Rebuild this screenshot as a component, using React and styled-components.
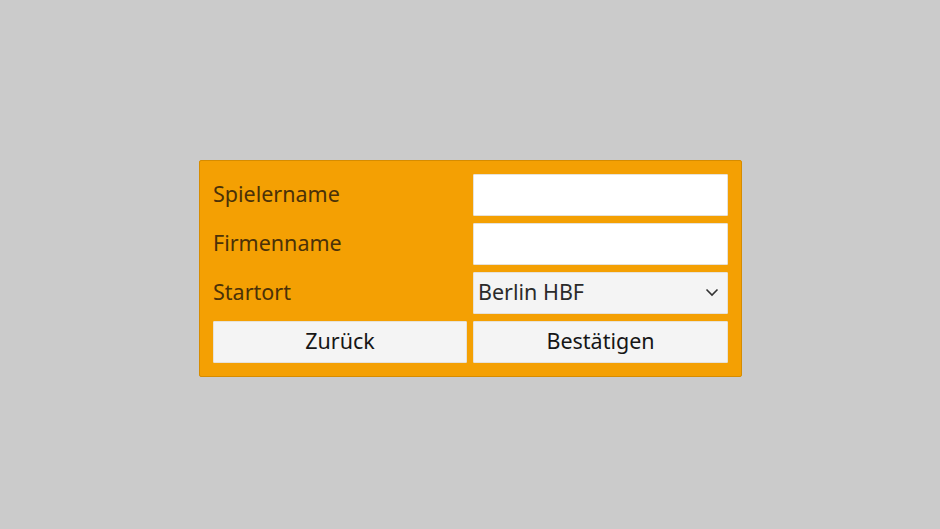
import React from 'react';
import styled, { createGlobalStyle } from 'styled-components';

const GlobalStyle = createGlobalStyle`
  html, body {
    margin: 0;
    padding: 0;
    height: 100%;
    background: #cbcbcb;
  }
  #root {
    height: 100%;
  }
`;

const Page = styled.div`
  width: 940px;
  height: 529px;
  display: flex;
  align-items: flex-start;
  justify-content: center;
  padding-top: 160px;
  box-sizing: border-box;
  font-family: 'Noto Sans', 'Open Sans', sans-serif;
`;

const Panel = styled.form`
  width: 543px;
  box-sizing: border-box;
  margin-left: 1px;
  padding: 13px;
  background: #f4a003;
  border: 1px solid #d68c00;
  border-radius: 2px;
  display: grid;
  grid-template-columns: 254px 255px;
  column-gap: 6px;
  row-gap: 7px;
`;

const Label = styled.label`
  height: 42px;
  box-sizing: border-box;
  padding-bottom: 3px;
  display: flex;
  align-items: center;
  font-size: 21.5px;
  color: #4b3108;
`;

const Field = styled.input`
  height: 42px;
  box-sizing: border-box;
  margin: 0;
  border: 1px solid #e7e2d8;
  border-radius: 1px;
  background: #ffffff;
  font: inherit;
  font-size: 21.5px;
  padding: 0 6px;
  outline: none;
`;

const SelectWrap = styled.div`
  position: relative;
  height: 42px;
`;

const Select = styled.select`
  appearance: none;
  width: 100%;
  height: 42px;
  box-sizing: border-box;
  margin: 0;
  border: 1px solid #e7e2d8;
  border-radius: 1px;
  background: #f4f4f4;
  font: inherit;
  font-size: 21.5px;
  color: #2b2b2b;
  padding: 0 0 3px 4px;
  outline: none;
`;

const Chevron = styled.svg`
  position: absolute;
  right: 9px;
  top: 15px;
  pointer-events: none;
`;

const Button = styled.button`
  height: 42px;
  box-sizing: border-box;
  margin: 0;
  padding: 0 0 3px;
  border: 1px solid #e7e2d8;
  border-radius: 1px;
  background: #f4f4f4;
  font: inherit;
  font-size: 21.5px;
  color: #161616;
  cursor: pointer;
`;

export default function App() {
  return (
    <>
      <GlobalStyle />
      <Page>
        <Panel onSubmit={e => e.preventDefault()}>
          <Label htmlFor="player">Spielername</Label>
          <Field id="player" type="text" />
          <Label htmlFor="company">Firmenname</Label>
          <Field id="company" type="text" />
          <Label htmlFor="start">Startort</Label>
          <SelectWrap>
            <Select id="start" defaultValue="berlin">
              <option value="berlin">Berlin HBF</option>
            </Select>
            <Chevron width="14" height="10" viewBox="0 0 14 10">
              <path d="M1.5 2.5 L7 8 L12.5 2.5" fill="none" stroke="#333" strokeWidth="1.6" />
            </Chevron>
          </SelectWrap>
          <Button type="button">Zurück</Button>
          <Button type="submit">Bestätigen</Button>
        </Panel>
      </Page>
    </>
  );
}
